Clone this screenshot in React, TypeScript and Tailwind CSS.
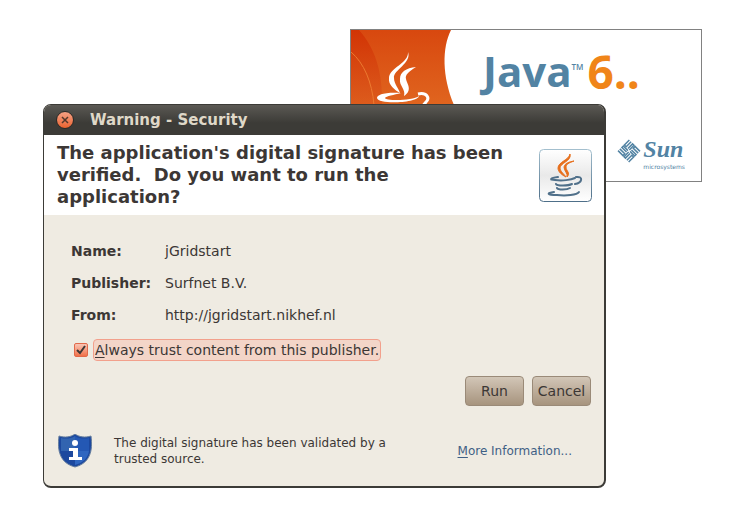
import type { ReactNode } from 'react'

interface DetailProps {
  label: string
  children: ReactNode
}

function Detail({ label, children }: DetailProps) {
  return (
    <div className="flex h-8 items-center">
      <dt className="w-[94px] font-bold">{label}</dt>
      <dd>{children}</dd>
    </div>
  )
}

function SplashArt() {
  return (
    <svg className="h-full w-[124px] shrink-0" viewBox="0 0 124 151" aria-hidden="true">
      <defs>
        <linearGradient id="splash-sky" x1="0" y1="0" x2="0" y2="1">
          <stop offset="0" stopColor="#d8480f" />
          <stop offset="0.5" stopColor="#e0651f" />
          <stop offset="1" stopColor="#ea8a3c" />
        </linearGradient>
        <linearGradient id="splash-band" x1="0" y1="0" x2="0" y2="1">
          <stop offset="0" stopColor="#d23404" />
          <stop offset="0.5" stopColor="#d8501a" stopOpacity="0.4" />
        </linearGradient>
      </defs>
      <path d="M0 0H100C91 18 91 46 103 75C110 100 118 125 124 151H0Z" fill="url(#splash-sky)" />
      <path d="M0 0H8C24 18 32 42 31 75V151H0Z" fill="url(#splash-band)" />
      <path d="M0 22C13 33 21 52 23 75" fill="none" stroke="#ec7a30" />
      <path d="M57 22C61 33 42 40 43 48C43 54 48 59 49 63C44 60 37 55 38 48C38 38 58 33 57 22Z" fill="#fff" />
      <path d="M65 37C57 42 54 45 55 49C56 54 62 60 53 66C55 59 48 56 49 49C49 42 55 38 65 37Z" fill="#fff" />
      <path d="M50 63C33 62 26 65 26 68C27 75 67 73 68 66C62 71 34 71 34 68C35 66 43 65 50 63Z" fill="#fff" />
      <path d="M67 64C76 62 79 68 75 72L70 78" fill="none" stroke="#fff" strokeWidth="3" />
    </svg>
  )
}

function SunMark() {
  return (
    <svg className="mt-1 h-6 w-6" viewBox="0 0 24 24" fill="none" stroke="#5283a3" strokeWidth="1.5" aria-hidden="true">
      <g transform="rotate(45 12 12)">
        {[0, 90, 180, 270].map((angle) => (
          <path key={angle} transform={`rotate(${angle} 12 12)`} d="M4.5 4V11H7V4M9.5 11V4.5H11.5V11" />
        ))}
      </g>
    </svg>
  )
}

function JavaSplash() {
  return (
    <section className="absolute top-[29px] left-[350px] flex h-[153px] w-[352px] overflow-hidden border border-[#818181] bg-white">
      <SplashArt />
      <div className="flex flex-1 flex-col justify-between pb-[10px] pl-2">
        <div className="flex pt-[13px] font-['Open_Sans',sans-serif] text-[42px] leading-[56px] font-bold text-[#5283a3]">
          Java
          <sup className="top-0 pt-5 text-[8px] leading-none font-semibold">TM</sup>
          <span className="pl-1 text-[46px] text-[#f08519]">6..</span>
        </div>
        <div className="flex items-start gap-0.5 self-end pr-4 text-[#5283a3]">
          <SunMark />
          <div>
            <p className="font-['Liberation_Serif',serif] text-[24px] leading-7 font-bold italic">Sun</p>
            <p className="font-['DejaVu_Sans',sans-serif] text-[6px] leading-2">microsystems</p>
          </div>
        </div>
      </div>
    </section>
  )
}

function JavaIcon() {
  return (
    <svg className="h-[53px] w-[53px] shrink-0" viewBox="0 0 53 53" aria-hidden="true">
      <defs>
        <linearGradient id="java-tile" x1="0" y1="0" x2="0" y2="1">
          <stop offset="0" stopColor="#fff" />
          <stop offset="0.5" stopColor="#e9e9e9" />
          <stop offset="1" stopColor="#fff" />
        </linearGradient>
        <linearGradient id="java-edge" x1="0" y1="0" x2="0" y2="1">
          <stop offset="0" stopColor="#a3bfce" />
          <stop offset="1" stopColor="#4e6f89" />
        </linearGradient>
      </defs>
      <rect x="0.5" y="0.5" width="52" height="52" rx="4" fill="url(#java-tile)" stroke="url(#java-edge)" />
      <path d="M31 5C33 12 21 14 21 19C21 22 25 25 27 28C23 26 19 23 19 19C19 13 30 11 31 5Z" fill="#e76f1c" stroke="#e76f1c" />
      <path d="M35 12C30 14 27 15 27 18C27 22 32 24 28 28C29 24 25 22 25 18C26 14 30 13 35 12Z" fill="#e76f1c" stroke="#e76f1c" />
      <g fill="none" stroke="#50708a" strokeWidth="2" strokeLinecap="round">
        <path d="M19 28C11 29 10 31 16 31C23 32 32 31 36 29" />
        <path d="M37 28C45 27 43 34 36 35" />
        <path d="M17 35C18 37 29 37 33 35" />
        <path d="M18 39C19 41 28 41 31 39" />
        <path d="M15 43C7 44 8 46 18 46C27 47 38 46 40 43" />
      </g>
    </svg>
  )
}

function ShieldIcon() {
  return (
    <svg className="h-[34px] w-[34px] shrink-0" viewBox="0 0 34 34" aria-hidden="true">
      <path d="M17 0C13 3 7 4 1 2C-1 17 2 29 17 33C32 29 35 17 33 2C27 4 21 3 17 0Z" fill="#1c489e" stroke="#667e9d" />
      <path d="M17 2C13 5 7 5 3 4V17H17Z" fill="#3264b0" />
      <path d="M17 2C21 5 27 5 31 4V17H17Z" fill="#2458b4" />
      <path d="M17 17H31C30 24 25 29 17 31Z" fill="#2f66c0" />
      <circle cx="17" cy="9" r="3" fill="#fff" />
      <path d="M11 14H20V23H24V26H11V23H15V17H11Z" fill="#fff" />
    </svg>
  )
}

function SecurityDialog() {
  return (
    <section
      role="dialog"
      aria-labelledby="dialog-title"
      className="relative mr-[134px] ml-[43px] overflow-hidden rounded-lg border-2 border-t border-l-1 border-[#3c3b37] bg-[#efebe2] font-['DejaVu_Sans',sans-serif] text-[14px] text-[#3c3735]"
    >
      <header className="flex h-[30px] items-center gap-4 bg-linear-to-b from-[#5b5954] to-[#3c3b37] to-60% pl-3">
        <button
          type="button"
          aria-label="Close"
          className="flex h-[18px] w-[18px] items-center justify-center rounded-full border border-[#2c2a27] bg-linear-to-b from-[#f6a184] to-[#e9622c]"
        >
          <svg className="h-2 w-2" viewBox="0 0 8 8" stroke="#54382b" strokeWidth="1.5" aria-hidden="true">
            <path d="M1 1L7 7M7 1L1 7" />
          </svg>
        </button>
        <h1 id="dialog-title" className="text-[15px] font-bold text-[#dfd8c8]">
          Warning - Security
        </h1>
      </header>

      <div className="flex h-20 items-center justify-between bg-white pr-3 pl-[13px]">
        <h2 className="w-[460px] text-[18px] leading-[22px] font-bold">
          The application's digital signature has been verified.&nbsp; Do you want to run the application?
        </h2>
        <JavaIcon />
      </div>

      <div className="pt-5 pr-[13px] pl-[27px]">
        <dl>
          <Detail label="Name:">jGridstart</Detail>
          <Detail label="Publisher:">Surfnet B.V.</Detail>
          <Detail label="From:">http://jgridstart.nikhef.nl</Detail>
        </dl>
        <label className="flex items-center gap-0.5 pt-2">
          <span className="grid place-items-center">
            <input
              type="checkbox"
              defaultChecked
              className="col-start-1 row-start-1 mx-[3px] h-[14px] w-[14px] appearance-none rounded-xs border border-[#e2694a] bg-linear-to-b from-[#f8c5b5] to-[#f07048]"
            />
            <svg className="pointer-events-none col-start-1 row-start-1 h-3 w-3" viewBox="0 0 12 12" fill="none" stroke="#3c3735" strokeWidth="2" aria-hidden="true">
              <path d="M2 6L5 9L10 2" />
            </svg>
          </span>
          <span className="rounded-sm border border-[#f2a08c] bg-[#f3d5c8] px-px leading-5">
            <u className="underline-offset-2">A</u>lways trust content from this publisher.
          </span>
        </label>
        <div className="flex justify-end gap-2 pt-[15px]">
          <button
            type="button"
            className="h-[30px] w-[59px] rounded border border-[#9a8a78] bg-linear-to-b from-[#d2c6b7] to-[#a7947e]"
          >
            Run
          </button>
          <button
            type="button"
            className="h-[30px] w-[59px] rounded border border-[#9a8a78] bg-linear-to-b from-[#d2c6b7] to-[#a7947e]"
          >
            Cancel
          </button>
        </div>
      </div>

      <footer className="flex items-center pt-7 pr-8 pb-[18px] pl-[14px] text-[12px]">
        <ShieldIcon />
        <p className="w-[330px] pl-[22px] leading-4">The digital signature has been validated by a trusted source.</p>
        <a href="#more" className="ml-auto text-[#3f5f85]">
          <u className="underline-offset-2">M</u>ore Information...
        </a>
      </footer>
    </section>
  )
}

export default function App() {
  return (
    <main className="relative min-h-screen bg-white pt-[104px]">
      <JavaSplash />
      <SecurityDialog />
    </main>
  )
}
